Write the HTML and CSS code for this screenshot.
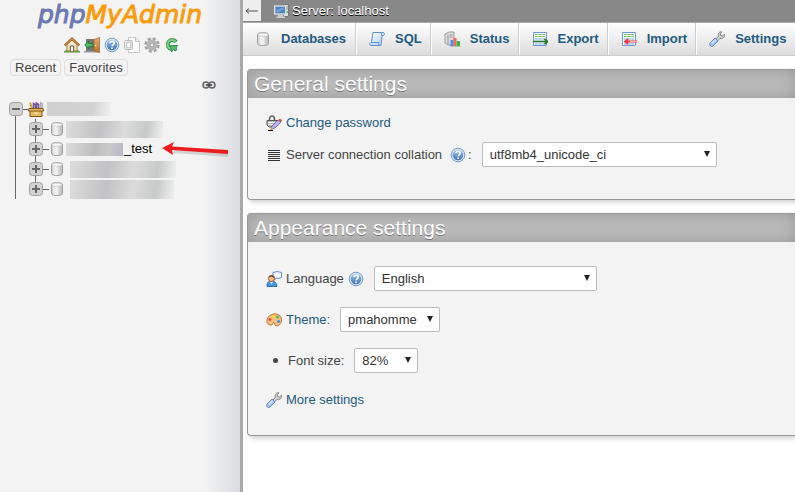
FILE: index.html
```html
<!DOCTYPE html>
<html lang="en">
<head>
<meta charset="utf-8">
<title>phpMyAdmin</title>
<link rel="stylesheet" href="styles.css">
</head>
<body>
<svg class="sprite" aria-hidden="true">
  <defs>
    <linearGradient id="metal"><stop offset="0" stop-color="#c4c4c4"/><stop offset=".35" stop-color="#fff"/><stop offset="1" stop-color="#b4b4b4"/></linearGradient>
    <linearGradient id="blue" x2="0" y2="1"><stop offset="0" stop-color="#9cc4ec"/><stop offset="1" stop-color="#3f73b5"/></linearGradient>
    <linearGradient id="paper" x2="1" y2="1"><stop offset="0" stop-color="#fff"/><stop offset="1" stop-color="#a9cdf3"/></linearGradient>
    <linearGradient id="wood" x2="0" y2="1"><stop offset="0" stop-color="#e2ae70"/><stop offset="1" stop-color="#b57530"/></linearGradient>
  </defs>
  <symbol id="db" viewBox="0 0 16 16"><path d="M2.500 3.500C2.500 1 13.500 1 13.500 3.500v9c0 2.700-11 2.700-11 0z" fill="url(#metal)" stroke="#a2a2a2"/><ellipse cx="8" cy="3.700" rx="5" ry="1.700" fill="#f6f6f6" stroke="#c2c2c2" stroke-width=".7"/><path d="M6 7v6M9.500 7v6" stroke="#ddd" stroke-width=".8"/></symbol>
  <symbol id="help" viewBox="0 0 16 16"><circle cx="8" cy="8" r="6.800" fill="#dbe8f6" stroke="#7598c4"/><circle cx="8" cy="8" r="5.300" fill="url(#blue)"/><path d="M5.900 6.300c0-2.600 4.300-2.500 4.300 0 0 1.500-2.100 1.500-2.100 3" fill="none" stroke="#fff" stroke-width="1.600"/><path d="M7.200 10.500h1.800v1.600H7.200z" fill="#fff"/></symbol>
  <symbol id="wrench" viewBox="0 0 16 16"><path d="M7 8l2.500-3C8.500 2.500 10.500.3 13 .8l-1.700 2 .5 1.700 1.700.5 2-1.700c.3 3-1.700 5-4.500 4.200L8.500 10z" fill="#d0d0d0" stroke="#858585"/><path d="M6 7l3 3-5 5C2 16.500-.6 14 1 12z" fill="#9fbff0" stroke="#6288d0"/><path d="M2.600 12.600l4-4" stroke="#d5e5ff" stroke-width="1.500"/></symbol>
  <symbol id="sheet" viewBox="0 0 16 16"><path d="M1.500 1.500h13v13h-13z" fill="#f8fbff" stroke="#6d97d5"/><path d="M3 3.500h10M3 5.500h10" stroke="#78bd64"/><path d="M3 8h10M3 10.500h10M3 13h10" stroke="#a6c3ea" stroke-width="1.500"/><path d="M6 2v12M10 2v12" stroke="#dce8f8" stroke-width=".8"/></symbol>
  <symbol id="plus" viewBox="0 0 14 14"><rect x=".5" y=".5" width="13" height="13" rx="3" fill="#d2d2d2" stroke="#a0a0a0"/><path d="M3 7h8M7 3v8" stroke="#666" stroke-width="2"/></symbol>
</svg>

<aside class="sidebar">
  <a class="logo" href="#"><span>php</span>MyAdmin</a>
  <nav class="tools" aria-label="Quick links">
    <a href="#" aria-label="Home"><svg class="icon" viewBox="0 0 16 16"><path d="M0 14.500q3-3 6-1h4q3-2 6 1v1H0z" fill="#4d9a43"/><path d="M3 7v7h10V7L8 3z" fill="#f4e6cb" stroke="#a9772f"/><path d="M6.300 14V9h3.400v5" fill="#fff" stroke="#6b4d27"/><path d="M.8 8.500L8 1.700l7.200 6.800" fill="none" stroke="#9f5e2a" stroke-width="2.400"/><path d="M1.500 7.800L8 1.700l6.500 6.100" fill="none" stroke="#dfa85b"/></svg></a>
    <a href="#" aria-label="Log out"><svg class="icon" viewBox="0 0 16 16"><path d="M2 2h8v12H2z" fill="#777"/><path d="M0 14h15v1.500H0z" fill="#999"/><path d="M10 2.500L15.500.5v15L10 14z" fill="url(#wood)" stroke="#986023" stroke-width=".7"/><circle cx="11.500" cy="8.500" r=".8" fill="#fff2ad"/><path d="M.7 8l4-4v2.300h4v3.500h-4V12z" fill="#58b86a" stroke="#207e39"/></svg></a>
    <a href="#" aria-label="Documentation"><svg class="icon"><use href="#help"/></svg></a>
    <a href="#" aria-label="SQL documentation"><svg class="icon" viewBox="0 0 16 16"><path d="M4.500.5h7l4 4v11h-11z" fill="#fff" stroke="#c5c5c5"/><path d="M11.500.5v4h4" fill="#eee" stroke="#bbb"/><rect x=".5" y="3.500" width="8" height="9" rx="1" fill="#eee" stroke="#bbb"/><path d="M2.700 5.300h4v5.500h-4z" fill="#fff" stroke="#bbb"/></svg></a>
    <a href="#" aria-label="Panel settings"><svg class="icon" viewBox="0 0 16 16"><circle cx="8" cy="8" r="6.300" fill="none" stroke="#a0a0a0" stroke-width="2.800" stroke-dasharray="2.900 2.048"/><circle cx="8" cy="8" r="4" fill="#eee" stroke="#b4b4b4" stroke-width="3"/><circle cx="8" cy="8" r="2" fill="#f3f3f3" stroke="#909090"/></svg></a>
    <a href="#" aria-label="Reload"><svg class="icon" viewBox="0 0 16 16"><path d="M12 5A4.500 4.500 0 1 0 7.500 12" fill="none" stroke="#31934a" stroke-width="4"/><path d="M11.500 4.600A4.500 4.500 0 1 0 7.500 12" fill="none" stroke="#85cf8c" stroke-width="2"/><path d="M6.500 8.500h7l-1.500 2.500 1 1.500-2 1.500-1.500-1.500-2 2.500z" fill="#58b76a" stroke="#31934a"/></svg></a>
  </nav>
  <div class="shortcuts"><button type="button">Recent</button><button type="button">Favorites</button></div>
  <div class="link-row"><a href="#" aria-label="Unlink from main panel"><svg class="chain" viewBox="0 0 14 8"><rect x="1" y="1" width="6" height="6" rx="3" fill="#ddd" stroke="#666" stroke-width="1.500"/><rect x="7" y="1" width="6" height="6" rx="3" fill="#ddd" stroke="#666" stroke-width="1.500"/><path d="M4 4h6" stroke="#444" stroke-width="1.600"/></svg></a></div>

  <div class="tree">
    <div class="node root">
      <button type="button" class="toggle" aria-label="Collapse"><svg viewBox="0 0 14 14"><rect x=".5" y=".5" width="13" height="13" rx="3" fill="#d2d2d2" stroke="#a0a0a0"/><path d="M3 7h8" stroke="#666" stroke-width="2"/></svg></button>
      <span class="dash"></span>
      <svg class="icon" viewBox="0 0 16 16"><path d="M2 1.500l2 6" stroke="#d5a928" stroke-width="2"/><path d="M5.500 8V2.500l2 1v4M8.500 8V2l2 1.500v4" stroke="#7654a0" stroke-width="1.600" fill="none"/><path d="M12 8l.5-6.500 2 1-.5 5" fill="#ddd" stroke="#999"/><path d="M1 7.500h14l.7 2.500H14v5.500H2V10H.3z" fill="#e9bb65" stroke="#84541b"/><path d="M2 10h12" stroke="#84541b"/><path d="M6.500 11.500h3v1.500h-3z" fill="#fff1b8"/></svg>
      <span class="redacted host"></span>
    </div>
    <ul class="children">
      <li class="node"><button type="button" class="toggle" aria-label="Expand"><svg><use href="#plus"/></svg></button><span class="dash"></span><svg class="icon"><use href="#db"/></svg><span class="redacted first"></span></li>
      <li class="node"><button type="button" class="toggle" aria-label="Expand"><svg><use href="#plus"/></svg></button><span class="dash"></span><svg class="icon"><use href="#db"/></svg><span class="redacted prefix"></span><a class="name" href="#">_test</a>
        <svg class="pointer" viewBox="0 0 70 20"><path d="M13 12l54 4" stroke="#999" stroke-width="4" opacity=".35"/><path d="M1 9L13 3l-2 4.500L67 11v4l-56-4 1 5z" fill="#ed1c20"/></svg></li>
      <li class="node"><button type="button" class="toggle" aria-label="Expand"><svg><use href="#plus"/></svg></button><span class="dash"></span><svg class="icon"><use href="#db"/></svg><span class="redacted third"></span></li>
      <li class="node"><button type="button" class="toggle" aria-label="Expand"><svg><use href="#plus"/></svg></button><span class="dash"></span><svg class="icon"><use href="#db"/></svg><span class="redacted fourth"></span></li>
    </ul>
  </div>
</aside>

<main>
  <header class="server">
    <button type="button" class="hide" aria-label="Hide panel"><svg viewBox="0 0 14 10"><path d="M1 5h12M4 2.500L1 5l3 2.500" fill="none" stroke="#555"/></svg></button>
    <svg class="icon" viewBox="0 0 16 16"><path d="M9.500 1.500h5v12h-5z" fill="#ddd" stroke="#777"/><path d="M11 4h3M11 6h3" stroke="#888"/><path d="M13 8v2" stroke="#49b243" stroke-width="1.500"/><rect x=".7" y="3" width="11" height="8" fill="#5280bd" stroke="#d8dde5" stroke-width="1.400"/><path d="M2 7l8-3v2.500L3 10z" fill="#8fb2df" opacity=".6"/><path d="M4 12h5v1.500h2V15H2v-1.500h2z" fill="#ccc"/></svg>
    <a href="#">Server: localhost</a>
  </header>
  <nav class="tabs" aria-label="Server">
    <a href="#"><svg class="icon"><use href="#db"/></svg>Databases</a>
    <a href="#"><svg class="icon" viewBox="0 0 16 16"><path d="M4 1.500h10c2 0 2 3 0 3h-1l-1 10H2c-2 0-1.500-3 .5-3z" fill="url(#paper)" stroke="#5b8fd0"/><path d="M13.500 1.500c-1 0-1.300 1.500-.8 3M2.500 11.500H10c-1 1-.5 3 1 3" fill="none" stroke="#5b8fd0"/></svg>SQL</a>
    <a href="#"><svg class="icon" viewBox="0 0 16 16"><path d="M1 3l4-2h5v13H4l-3-2z" fill="#ddd" stroke="#9b9b9b"/><path d="M4 3.500v10M5.500 4h3M5.500 6h3" stroke="#999"/><path d="M6.500 9h3v6.500h-3z" fill="#4b8ff0"/><path d="M9.500 7h3v8.500h-3z" fill="#ef6c5c"/><path d="M12.500 10H16v5.500h-3.500z" fill="#38b848"/></svg>Status</a>
    <a href="#"><svg class="icon" viewBox="0 0 16 16"><use href="#sheet"/><path d="M1 10.500h13.500M12.500 8l3 2.500-3 2.500" fill="none" stroke="#2c782c" stroke-width="1.700"/></svg>Export</a>
    <a href="#"><svg class="icon" viewBox="0 0 16 16"><use href="#sheet"/><path d="M16 10.500H4.500M7 8l-3 2.500L7 13" fill="none" stroke="#f13a42" stroke-width="1.800"/><path d="M9 10.500h7" stroke="#ffabb0"/></svg>Import</a>
    <a href="#"><svg class="icon"><use href="#wrench"/></svg>Settings</a>
  </nav>

  <section class="panel general">
    <h2>General settings</h2>
    <div class="rows">
      <div class="row"><svg class="icon" viewBox="0 0 16 16"><path d="M3.500 6V4c0-4 5-4 5 0v2" fill="none" stroke="#666" stroke-width="1.700"/><path d="M1 5.500h10v4L8 12H3L1 10z" fill="#bbb" stroke="#555"/><path d="M2 7.500h8M2 9.500h7" stroke="#eee"/><path d="M6 11l6-6 3 2-6 6-4 1.500z" fill="#b9b5f2" stroke="#5752a0" stroke-width=".8"/><path d="M12.500 5l1.500-1.500 2 2L15 7z" fill="#e04723"/><path d="M5.500 12l2 2-3 1z" fill="#e6ac24"/><path d="M2 15.500h5" stroke="#111"/></svg><a href="#">Change password</a></div>
      <div class="row"><svg class="icon" viewBox="0 0 16 16"><path d="M2 3.500h12M2 5.500h12M2 7.500h12M2 9.500h12M2 11.500h12M2 13.500h12" stroke="#333"/></svg><label for="collation">Server connection collation</label><span class="hint wide"><a href="#" aria-label="Collation help"><svg class="icon"><use href="#help"/></svg></a>:</span>
        <span class="select collation"><select id="collation"><option>utf8mb4_unicode_ci</option></select></span></div>
    </div>
  </section>

  <section class="panel appearance">
    <h2>Appearance settings</h2>
    <div class="rows">
      <div class="row"><svg class="icon" viewBox="0 0 16 16"><path d="M7 1.500Q11-.5 15.500 1.500v5Q13 8 10.500 7L8 9l.5-3L7 5z" fill="#f5faff" stroke="#6089c5"/><path d="M1 15.500Q.5 10 5.500 10t5.500 5.500z" fill="#4c99e3" stroke="#2e6dae"/><circle cx="5.500" cy="7.500" r="3" fill="#f4bd88" stroke="#a56635"/><path d="M2.500 7C3 3 8 3 8.500 7L5 5.500z" fill="#744626"/><path d="M4 11l1.500 2L7 11" fill="#fff"/></svg><label for="language">Language</label><span class="hint"><a href="#" aria-label="Language help"><svg class="icon"><use href="#help"/></svg></a></span>
        <span class="select language"><select id="language"><option>English</option></select></span></div>
      <div class="row"><svg class="icon" viewBox="0 0 16 16"><path d="M1 8C2 1 13-.5 15.300 6c1 4-1.300 8-5.300 8-2-.5-.5-3.500-2-3.500-2 0-1 3.500-4 2.500C1 12 .5 10 1 8z" fill="#f2c184" stroke="#bd7534"/><circle cx="4" cy="7.500" r="1.500" fill="#e94f38"/><circle cx="7.500" cy="4.500" r="1.500" fill="#f5d743"/><circle cx="11.500" cy="5" r="1.500" fill="#55b867"/><circle cx="12.500" cy="9.500" r="1.500" fill="#4a8edb"/></svg><label for="theme"><a href="#">Theme:</a></label>
        <span class="select theme"><select id="theme"><option>pmahomme</option></select></span></div>
      <div class="row"><span class="bullet"></span><label for="fontsize">Font size:</label>
        <span class="select fontsize"><select id="fontsize"><option>82%</option></select></span></div>
      <div class="row"><svg class="icon"><use href="#wrench"/></svg><a href="#">More settings</a></div>
    </div>
  </section>
</main>
</body>
</html>
```
FILE: styles.css
```css
* { box-sizing: border-box; }

body {
  display: grid;
  grid-template-columns: 243px minmax(0, 1fr);
  min-height: 100vh;
  margin: 0;
  overflow-x: hidden;
  background: #fff;
  color: #444;
  font: 13px/16px "Liberation Sans", Arial, sans-serif;
}

a { color: #235a81; text-decoration: none; }
button { padding: 0; border: 0; background: none; color: inherit; font: inherit; }
svg { display: block; flex: none; }
.sprite { position: absolute; width: 0; height: 0; }
.icon { width: 16px; height: 16px; }

/* Navigation panel */
.sidebar {
  border-right: 3px solid #aaa;
  background: linear-gradient(to right, #f3f3f3 205px, #dadce0 240px);
}

.logo {
  display: block;
  height: 37px;
  color: #f89c0e;
  font: italic 25px/30px "DejaVu Sans", sans-serif;
  text-align: center;
  -webkit-text-stroke: 1px currentColor;
}
.logo span { color: #6c78af; }

.tools { display: flex; gap: 4px; padding-left: 64px; }

.shortcuts { display: flex; gap: 3px; padding: 6px 10px 0; }
.shortcuts button {
  height: 17px;
  padding: 0 4px;
  border: 1px solid #ddd;
  border-radius: 4px;
  line-height: 15px;
}

.link-row { display: flex; justify-content: flex-end; padding: 5px 24px 0 0; }
.chain { width: 14px; height: 8px; }

.tree {
  margin: 10px 0 0 9px;
  background: linear-gradient(#666, #666) 6px 10px / 1px 100% no-repeat;
}
.node { display: flex; align-items: center; height: 20px; }
.toggle, .toggle svg { width: 14px; height: 14px; }
.dash { width: 5px; height: 1px; background: #666; }
.children {
  margin: 0;
  padding: 0 0 0 20px;
  list-style: none;
  background: linear-gradient(#666, #666) 26px 0 / 1px 72px no-repeat;
}
.children .dash { width: 6px; }
.name { color: #000; }
.pointer { width: 70px; height: 20px; margin-left: 9px; }

/* Obscured database names */
.redacted { background: linear-gradient(100deg, #ddd, #c2c2c4 35%, #dcdcdc 60%, #c8caca 82%, #f0f0f0); }
.host { width: 64px; height: 14px; margin-left: 3px; background: linear-gradient(100deg, #d0d0d0, #d2d2d2 70%, #f1f1f1); }
.first { width: 97px; height: 17px; margin-left: 1px; }
.prefix { width: 57px; height: 13px; margin: 0 1px; background: linear-gradient(100deg, #ddd, #bdbdbe 50%, #cacaca 75%, #b6b7c5); }
.third { width: 106px; height: 17px; margin-left: 5px; }
.fourth { width: 104px; height: 19px; margin-left: 5px; }

/* Server bar and tabs */
.server {
  display: flex;
  align-items: center;
  height: 22px;
  background: #888;
}
.server a { margin-left: 2px; color: #fff; text-shadow: 0 1px 0 #000; }
.server .icon { margin-left: 13px; }
.hide { width: 18px; height: 21px; align-self: flex-start; padding: 0 2px; background: #eee; }

.tabs {
  display: flex;
  height: 34px;
  border-top: 1px solid #aaa;
  border-bottom: 1px solid #ccc;
  background: linear-gradient(#fff, #dcdcdc);
  font-weight: bold;
}
.tabs a {
  display: flex;
  flex: none;
  align-items: center;
  gap: 10px;
  padding: 0 8px 0 12px;
  border-left: 1px solid #fff;
  border-right: 1px solid #ccc;
}
.tabs a:first-child { padding-right: 9px; border-left: 0; }
.tabs a:last-child { flex: 1; border-right: 0; }

/* Settings panels */
.panel {
  margin: 13px 0 0 4px;
  border: 1px solid #999;
  border-right: 0;
  border-radius: 4px 0 0 4px;
  background: #f3f3f3;
  box-shadow: 2px 2px 5px #ccc;
}
.panel h2 {
  height: 28px;
  margin: 0;
  padding-left: 6px;
  border-radius: 3px 0 0 0;
  background: #bbb;
  box-shadow: inset 0 0 16px #999;
  color: #fff;
  font-size: 21px;
  font-weight: normal;
  line-height: 28px;
  text-shadow: 0 1px 0 #777;
}

.rows { display: grid; padding: 0 18px; }
.general .rows { gap: 8px; padding-top: 14px; padding-bottom: 32px; }
.appearance .rows { gap: 16px; padding-top: 24px; padding-bottom: 24px; }
.row { display: flex; align-items: center; min-height: 22px; }
.row > .icon { margin-right: 4px; }

.hint { display: flex; align-items: center; gap: 2px; margin-left: 4px; }
.wide { margin-left: 8px; }

.bullet { width: 5px; height: 5px; margin: 0 10px 0 7px; border-radius: 50%; background: #444; }

.select { position: relative; margin-left: 10px; }
.select::after {
  content: "";
  position: absolute;
  top: 9px;
  right: 7px;
  border: 3px solid transparent;
  border-top: 6px solid #222;
  border-bottom: 0;
  pointer-events: none;
}
.select select {
  display: block;
  width: 100%;
  height: 25px;
  padding: 0 20px 0 7px;
  border: 1px solid #bbb;
  border-radius: 2px;
  appearance: none;
  background: #fff;
  color: #333;
  font: inherit;
}
.collation { width: 235px; }
.language { width: 223px; }
.theme { width: 100px; }
.fontsize { width: 64px; }
```
